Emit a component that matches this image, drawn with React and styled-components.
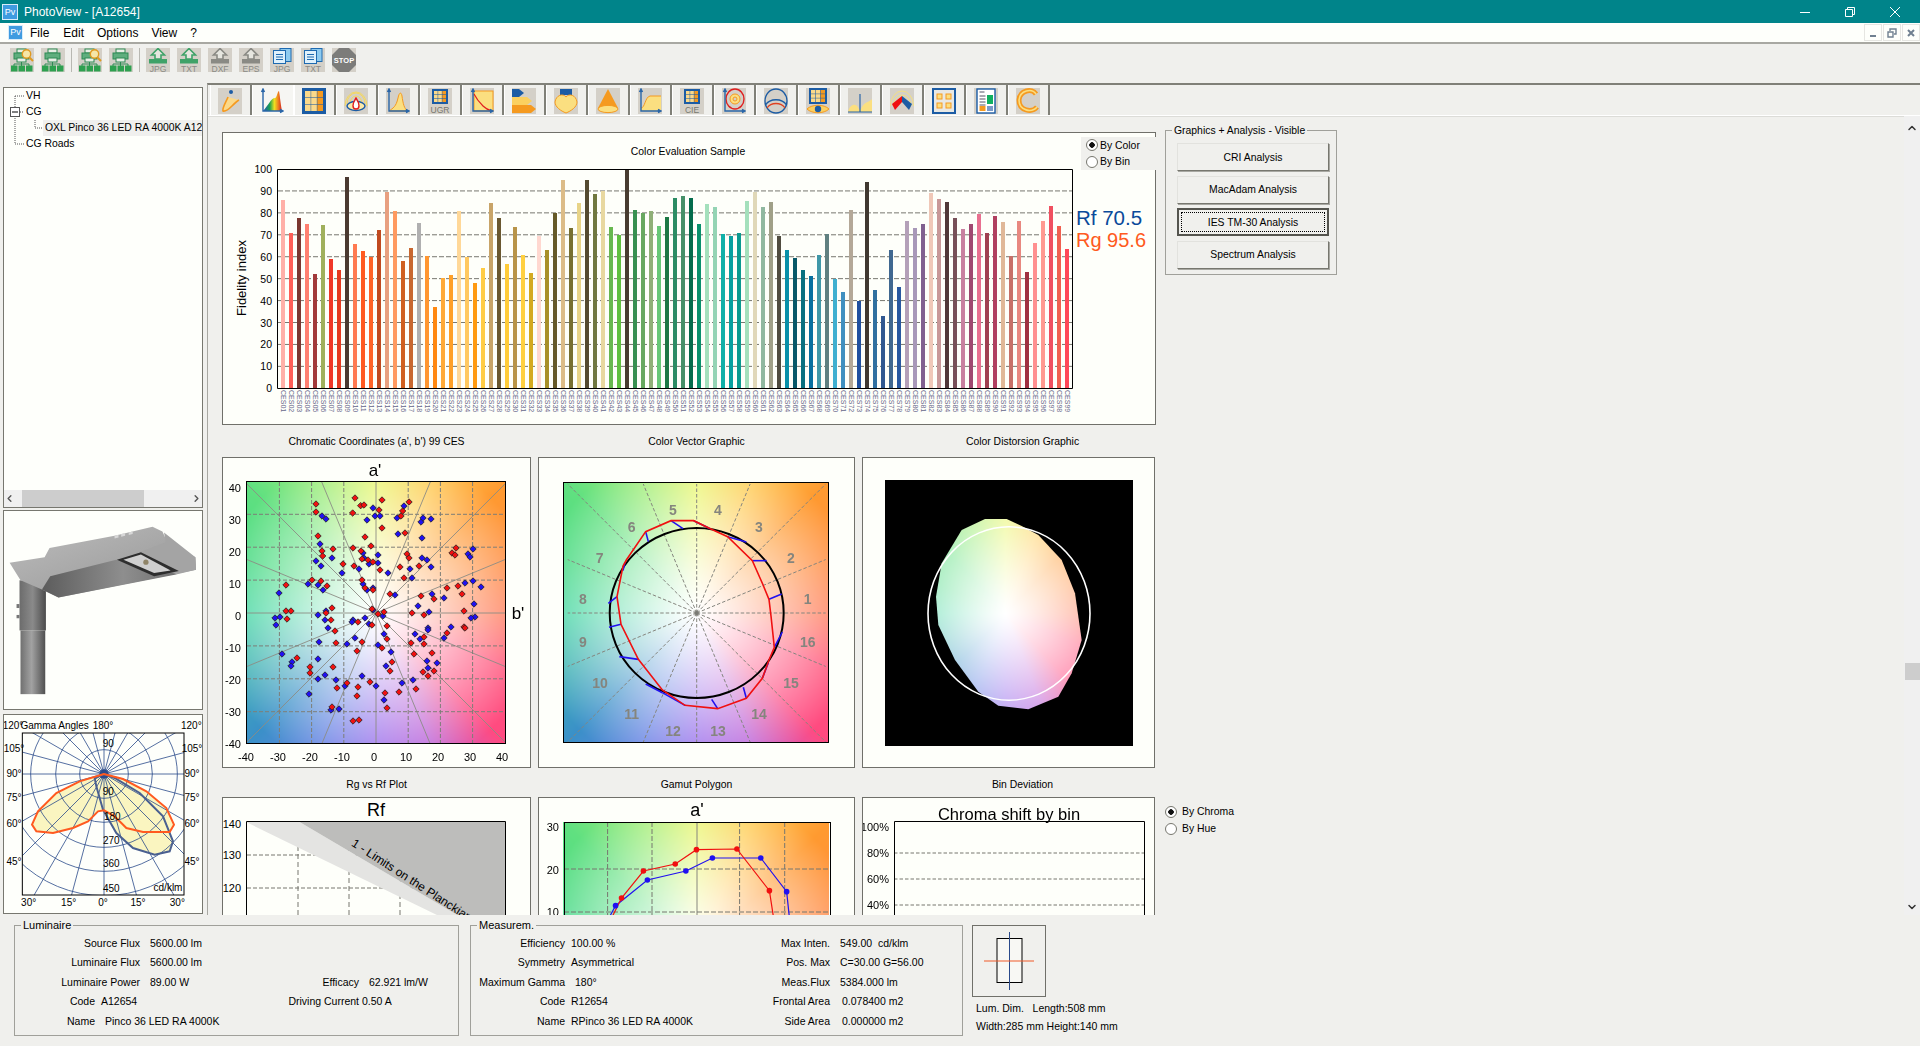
import React, { useEffect, useRef } from "react";
import styled, { createGlobalStyle } from "styled-components";
import { ChevronUp, ChevronDown, ChevronLeft, ChevronRight } from "lucide-react";

const GlobalStyle = createGlobalStyle`
  html, body { margin: 0; padding: 0; background: #f0f0ed; }
  body { font-family: "Liberation Sans", Arial, sans-serif; font-size: 11px; color: #000; }
  * { box-sizing: border-box; }
`;

const Window = styled.div`
  width: 1920px;
  height: 1046px;
  display: flex;
  flex-direction: column;
  overflow: hidden;
  background: #f0f0ed;
`;

const TitleBar = styled.div`
  height: 23px;
  background: #00848a;
  color: #fff;
  font-size: 12px;
  display: flex;
  align-items: center;
  padding-left: 2px;
  flex: none;
`;

const AppBadge = styled.span`
  width: ${(p) => p.$size}px;
  height: ${(p) => p.$size}px;
  background: #3f9be0;
  border: 1px solid #d8ecfa;
  color: #fff;
  font-size: 9px;
  line-height: ${(p) => p.$size - 2}px;
  text-align: center;
  flex: none;
`;

const TitleText = styled.span`
  margin-left: 6px;
  flex: 1;
`;

const WinControls = styled.div`
  display: flex;
  align-items: center;
  height: 100%;
  padding-right: 20px;
  gap: 35px;
`;

const MenuBar = styled.div`
  height: 21px;
  background: #fefffb;
  border-bottom: 2px solid #a8a8a2;
  display: flex;
  align-items: center;
  padding-left: 8px;
  font-size: 12px;
  flex: none;
`;

const MenuItem = styled.span`
  margin-left: ${(p) => p.$ml}px;
`;

const MdiButtons = styled.div`
  margin-left: auto;
  display: flex;
  gap: 1px;
`;

const MdiButton = styled.span`
  width: 18px;
  height: 17px;
  border: 1px solid #e6e6e2;
  display: flex;
  align-items: center;
  justify-content: center;
`;

const ToolBar = styled.div`
  height: 39px;
  display: flex;
  align-items: flex-start;
  padding: 4px 0 0 10px;
  gap: 7px;
  flex: none;
`;

const ToolSep = styled.span`
  width: 1px;
  height: 24px;
  background: #b8b8b2;
  margin: 0 -1px;
`;

const IconSvg = styled.svg`
  display: block;
  flex: none;
  background: ${(p) => p.$bg || "#d4d0c8"};
  font-family: "Liberation Sans", Arial, sans-serif;
`;

const Body = styled.div`
  height: 832px;
  display: flex;
  flex: none;
`;

const LeftColumn = styled.div`
  width: 207px;
  flex: none;
  padding: 4px 0 0 3px;
  display: flex;
  flex-direction: column;
  gap: 4px;
`;

const TreePanel = styled.div`
  width: 200px;
  height: 421px;
  border: 1px solid #77776f;
  background: #fefffb;
  display: flex;
  flex-direction: column;
  flex: none;
  margin-bottom: -2px;
`;

const TreeList = styled.div`
  flex: 1;
  position: relative;
  overflow: hidden;
`;

const TreeLines = styled.svg`
  position: absolute;
  left: 0;
  top: 0;
`;

const TreeRow = styled.div`
  height: 16px;
  line-height: 16px;
  font-size: 10.4px;
  white-space: nowrap;
  padding-left: ${(p) => (p.$child ? 39 : 22)}px;
`;

const TreeLabel = styled.span`
  padding: 0 ${(p) => (p.$sel ? 12 : 0)}px 0 ${(p) => (p.$sel ? 2 : 0)}px;
  display: inline-block;
  background: ${(p) => (p.$sel ? "#f0f0ee" : "transparent")};
`;

const HScroll = styled.div`
  height: 17px;
  background: #f0f0f0;
  display: flex;
  align-items: center;
  justify-content: space-between;
  flex: none;
`;

const HThumb = styled.span`
  width: 122px;
  height: 17px;
  background: #cdcdcd;
  margin-left: 7px;
  margin-right: auto;
`;

const ThumbPanel = styled.div`
  width: 200px;
  height: 200px;
  border: 1px solid #77776f;
  background: #fefffb;
  flex: none;
`;

const MainPane = styled.div`
  flex: 1;
  border-left: 1px solid #a8a8a2;
  border-top: 2px solid #808078;
  display: flex;
  flex-direction: column;
  min-width: 0;
`;

const TabStrip = styled.div`
  height: 31px;
  border-bottom: 1px solid #fff;
  box-shadow: 0 1px 0 #dcdcd8;
  display: flex;
  padding-left: 2px;
  flex: none;
`;

const Tab = styled.div`
  width: 42px;
  height: 30px;
  padding: 3px 0 0 7px;
  border-right: ${(p) => (p.$active ? "1px solid #fff" : "2px solid #808078")};
  border-left: 1px solid #fff;
  background: ${(p) => (p.$active ? "#f6f6f3" : "transparent")};
`;

const ScrollPane = styled.div`
  flex: 1;
  display: flex;
  min-height: 0;
  overflow: hidden;
`;

const Content = styled.div`
  flex: 1;
  padding: 16px 0 0 14px;
  overflow: hidden;
`;

const TopRow = styled.div`
  display: flex;
  align-items: flex-start;
  gap: 9px;
`;

const Panel = styled.div`
  position: relative;
  height: ${(p) => p.$h || 311}px;
  width: ${(p) => (p.$w ? `${p.$w}px` : "auto")};
  flex: none;
  background: #fefffa;
  border: 1px solid #70706a;
  padding: ${(p) => p.$pad ?? 0}px 0 0 ${(p) => p.$pad ?? 0}px;
`;

const FlowSvg = styled.svg`
  display: block;
  font-family: "Liberation Sans", Arial, sans-serif;
`;

const Overlay = styled.svg`
  position: absolute;
  left: 0;
  top: 0;
  width: 100%;
  height: 100%;
  font-family: "Liberation Sans", Arial, sans-serif;
`;

const ChartRadios = styled.div`
  position: absolute;
  left: 858px;
  top: 4px;
  width: 75px;
  height: 33px;
  background: #f0f0ed;
  display: flex;
  flex-direction: column;
`;

const RadioRow = styled.div`
  height: ${(p) => p.$h || 17}px;
  display: flex;
  align-items: center;
  gap: ${(p) => p.$gap || 5}px;
  padding-left: ${(p) => p.$pl || 0}px;
  font-size: 10.4px;
`;

const RadioDot = styled.span`
  width: 12px;
  height: 12px;
  border-radius: 50%;
  border: 1px solid #77776f;
  background: ${(p) =>
    p.$on ? "radial-gradient(circle, #111 0 2.5px, #fff 3px)" : "#fff"};
  flex: none;
`;

const GroupBox = styled.fieldset`
  margin: -7px 0 0 0;
  padding: 7px 0 0 11px;
  width: 172px;
  height: 150px;
  border: 1px solid #a0a09a;
  display: flex;
  flex-direction: column;
  gap: 4.5px;
`;

const GroupLegend = styled.legend`
  font-size: 10.4px;
  padding: 0 2px;
  margin-left: -5px;
`;

const AnalysisButton = styled.button`
  width: 152px;
  height: 28px;
  font: 10.4px "Liberation Sans", Arial, sans-serif;
  color: #000;
  background: #f0f0ed;
  border: ${(p) => (p.$focus ? "2px solid #55554f" : "1px solid")};
  border-color: ${(p) => (p.$focus ? "#55554f" : "#e2e2de #77776f #77776f #e2e2de")};
  box-shadow: ${(p) => (p.$focus ? "none" : "1px 1px 0 #a8a8a2")};
  outline: ${(p) => (p.$focus ? "1px dotted #000" : "none")};
  outline-offset: -5px;
  padding: 0;
`;

const PlotGrid = styled.div`
  display: grid;
  grid-template-columns: 309px 317px 293px 120px;
  column-gap: 7px;
`;

const CellTitle = styled.div`
  height: ${(p) => p.$h}px;
  padding: ${(p) => p.$top}px 0 0 ${(p) => p.$shift || 0}px;
  display: flex;
  align-items: center;
  justify-content: center;
  font-size: 10.4px;
`;

const SideRadios = styled.div`
  padding: 6px 0 0 3px;
`;

const BlackBox = styled.div`
  position: relative;
  width: 248px;
  height: 266px;
  background: #000;
`;

const Canvas = styled.canvas`
  display: block;
`;

const VScroll = styled.div`
  width: 16px;
  flex: none;
  background: #f0f0f0;
  display: flex;
  flex-direction: column;
  align-items: center;
  padding-top: 6px;
`;

const VThumb = styled.span`
  width: 15px;
  height: 17px;
  background: #cdcdcd;
  margin: 529px 0 221px;
  flex: none;
`;

const Footer = styled.div`
  height: 131px;
  display: flex;
  align-items: flex-start;
  padding: 4px 0 0 14px;
  flex: none;
`;

const Field = styled.fieldset`
  margin: 0 ${(p) => p.$mr}px 0 0;
  padding: 2px 0 0 0;
  width: ${(p) => p.$w}px;
  height: 117px;
  border: 1px solid #a0a09a;
  flex: none;
`;

const FieldLegend = styled.legend`
  font-size: 11px;
  padding: 0 2px;
  margin-left: 6px;
`;

const InfoRow = styled.div`
  height: 19.5px;
  display: flex;
  align-items: center;
  font-size: 10.5px;
  white-space: nowrap;
`;

const Lbl = styled.span`
  width: ${(p) => p.$w}px;
  text-align: right;
  flex: none;
`;

const Val = styled.span`
  width: ${(p) => (p.$w ? `${p.$w}px` : "auto")};
  margin-left: ${(p) => p.$ml}px;
  flex: none;
`;

const DimColumn = styled.div`
  display: flex;
  flex-direction: column;
  padding-top: 6px;
  font-size: 10.5px;
`;

const DimBox = styled.div`
  width: 74px;
  height: 72px;
  border: 1px solid #70706a;
  display: flex;
  align-items: center;
  justify-content: center;
`;

const DimText = styled.div`
  margin: ${(p) => p.$mt}px 0 0 4px;
  white-space: pre;
`;

// ---- data

const BARS = [
  [86, "#ffb0a8"], [71, "#ff5f57"], [77.5, "#7b3730"], [75, "#ff8070"], [52, "#a23a3a"], [74.5, "#a0b05c"],
  [59, "#f03828"], [54, "#e53a20"], [96.5, "#4a3a30"], [66, "#ff7a50"], [62.5, "#ff5a20"], [60, "#ff6428"],
  [72, "#c04a20"], [89.5, "#e8a080"], [81, "#ff9a60"], [58, "#d06020"], [64, "#c86830"], [75.5, "#b0b0b0"],
  [60.5, "#ff9630"], [37, "#ff8810"], [50.5, "#ffaa38"], [51.5, "#ffa028"], [81, "#ffd898"], [60, "#ffc860"],
  [48, "#ff9a10"], [55, "#ffcc44"], [84.5, "#c8a468"], [77.5, "#6a5830"], [56.5, "#ffcc38"], [73.5, "#b89448"],
  [61, "#ffd040"], [52.5, "#d4aa20"], [69.5, "#ffd8d0"], [63, "#a89028"], [80, "#665a28"], [95, "#dcbc88"],
  [73, "#787030"], [84.5, "#e8d488"], [95, "#544a30"], [88.5, "#707840"], [90, "#e8d8a0"], [73.5, "#68b850"],
  [70, "#60c040"], [100, "#483c30"], [81.5, "#389050"], [80, "#68a860"], [81, "#90b078"], [74, "#68c878"],
  [78, "#1c7844"], [87, "#2c8c64"], [87.5, "#469068"], [87, "#046c4c"], [75, "#08906c"], [84, "#a4e0bc"],
  [82.5, "#94d4b4"], [70.5, "#10b0a8"], [69.5, "#08a0a0"], [71, "#0a9a90"], [85.5, "#a4e0bc"], [89.5, "#e0d8b8"],
  [82.5, "#90b8a0"], [85, "#a0a088"], [69.5, "#504c40"], [63, "#0890a8"], [59.5, "#085868"], [54, "#087080"],
  [51, "#0870a0"], [61, "#4098a8"], [70.5, "#608080"], [50, "#40b0d0"], [44, "#4090c0"], [81.5, "#b4a898"],
  [40, "#2050a0"], [94, "#403830"], [45, "#3070a0"], [33, "#305890"], [63, "#406890"], [46, "#2858a0"],
  [76.4, "#b4a0b8"], [73, "#a898b8"], [75, "#806090"], [89, "#f0c8b8"], [86.4, "#c89898"], [85, "#503838"],
  [77.8, "#785058"], [72.8, "#c880a0"], [75, "#a04870"], [79.6, "#e87090"], [71, "#a04050"], [78.7, "#b04060"],
  [76, "#e0b898"], [60.5, "#c87068"], [76.4, "#e88880"], [53, "#a03040"], [66.4, "#ff9090"], [76.4, "#ff9a90"],
  [83, "#f05060"], [74, "#f06050"], [63.5, "#ff4858"],
];

const RED_DOTS = [
  [288,192],[288,216],[405,174],[422,197],[432,195],[486,180],[567,186],[477,210],[548,213],[543,228],[398,219],[486,264],
  [555,279],[435,291],[294,288],[453,318],[306,333],[308,348],[339,327],[399,324],[423,333],[426,357],[444,360],[459,366],
  [402,378],[369,372],[480,390],[540,381],[561,342],[567,354],[597,378],[552,414],[708,324],[696,339],[705,345],[276,420],
  [303,423],[321,438],[198,435],[426,420],[435,444],[459,450],[510,462],[603,468],[642,477],[681,444],[714,438],[726,462],
  [732,513],[198,513],[213,513],[201,537],[336,504],[318,519],[333,540],[456,507],[474,522],[492,516],[576,519],[612,525],
  [414,546],[456,555],[501,558],[345,573],[348,609],[426,606],[411,633],[501,597],[486,624],[573,609],[612,591],[612,612],
  [582,642],[636,639],[681,579],[732,561],[735,564],[231,654],[270,681],[270,699],[339,681],[516,666],[510,693],[609,696],
  [642,693],[624,708],[351,744],[381,729],[414,741],[411,768],[450,726],[495,759],[537,756],[588,747],[336,801],[501,804],
  [399,843],[417,840],
];

const BLUE_DOTS = [
  [306,228],[318,237],[441,240],[459,204],[465,228],[480,228],[552,198],[531,234],[603,246],[609,234],[633,237],[534,282],
  [606,294],[300,312],[288,363],[303,378],[336,354],[429,339],[432,354],[447,372],[474,345],[474,369],[417,387],[366,399],
  [504,399],[570,387],[606,354],[621,360],[633,381],[576,414],[744,342],[750,351],[759,327],[264,432],[294,435],[309,450],
  [429,432],[441,450],[459,444],[177,459],[525,465],[636,462],[672,474],[735,429],[759,423],[783,441],[594,498],[627,516],
  [762,492],[765,531],[753,534],[318,513],[294,525],[315,540],[165,534],[180,531],[168,555],[399,540],[396,546],[435,534],
  [447,552],[489,528],[459,510],[324,564],[492,582],[585,582],[600,597],[624,564],[624,570],[672,594],[693,561],[297,606],
  [381,612],[405,594],[474,615],[513,636],[186,642],[216,666],[213,678],[294,657],[498,678],[621,663],[651,669],[624,684],
  [315,705],[294,717],[348,720],[426,708],[375,738],[468,738],[546,729],[579,720],[267,762],[492,780],[357,807],[333,810],
];

const VECTOR_RED = [
  [408,242],[476,242],[526,266],[578,290],[652,362],[683,432],[702,478],[708,528],[718,622],[702,660],[682,715],[634,775],
  [548,806],[450,796],[382,750],[310,658],[258,553],[246,470],[264,378],[274,360],[332,275],
];

const VECTOR_BLUE = [
  [[476,242],[526,266]], [[578,290],[634,306]], [[652,362],[695,362]], [[702,478],[740,462]], [[718,622],[742,576]],
  [[682,715],[700,668]], [[634,775],[625,742]], [[548,806],[530,778]], [[450,796],[382,758]], [[382,758],[332,732]],
  [[310,658],[253,650]], [[258,553],[222,562]], [[246,470],[220,490]], [[264,392],[270,368]], [[332,275],[340,305]],
  [[408,242],[444,266]],
];

const BIN_NUMBERS = [
  ["1",818,478],["2",768,354],["3",672,262],["4",549,210],["5",414,210],["6",290,262],["7",194,354],["8",144,478],
  ["9",144,606],["10",195,730],["11",290,822],["12",414,874],["13",549,874],["14",672,822],["15",768,730],["16",818,606],
];

const DISTORT_SHAPE = [
  [390,237],[455,237],[500,258],[550,285],[620,360],[660,460],[680,600],[650,700],[610,770],[520,808],[430,797],[370,755],
  [300,660],[250,555],[243,470],[260,370],[320,270],
];

const GAMUT_RED = [[590,440],[604,384],[637,303],[685,282],[717,239],[778,237],[827,362],[833,440]];
const GAMUT_BLUE = [[586,440],[595,407],[643,330],[701,303],[741,264],[814,264],[853,365],[857,440]];

const POLAR_ORANGE = "M313 823 L240 845 L170 880 L115 935 L97 975 L110 995 L160 1000 L220 985 L265 965 L295 935 L313 932 L345 950 L380 985 L430 997 L510 997 L523 975 L500 925 L440 875 L370 838 Z";
const POLAR_BLUE = "M313 823 L285 835 L290 860 L310 930 L350 1000 L400 1045 L465 1065 L510 1055 L520 1025 L490 950 L420 880 L345 835 Z";

const POLAR_TEXT = [
  ["120°",40,677],["Gamma Angles",165,677],["180°",310,677],["120°",575,677],["105°",43,748],["105°",577,748],
  ["90°",43,822],["90°",577,822],["75°",43,893],["75°",577,893],["60°",43,973],["60°",577,973],["45°",43,1085],["45°",577,1085],
  ["30°",87,1208],["15°",207,1208],["0°",310,1208],["15°",415,1208],["30°",533,1208],
  ["90",326,731],["90",326,875],["180",338,950],["270",335,1022],["360",335,1093],["450",335,1168],["cd/klm",505,1163],
];

// colour wheel going counter clockwise from +x, 16 steps
const WHEEL = [
  "#ff7b59","#ff8e42","#ff9a30","#ffcc55","#e9f66e","#a1ed7b","#60e080","#4bda84",
  "#44d6a2","#42b4b4","#3a90c8","#6884e4","#986eeb","#be68da","#ff4a80","#ff557b",
].map((h) => [1, 3, 5].map((i) => parseInt(h.slice(i, i + 2), 16)));

const wheelPixel = (nx, ny) => {
  const a = (Math.atan2(ny, nx) + Math.PI * 2) % (Math.PI * 2);
  const f = a / (Math.PI / 8);
  const i = Math.floor(f) % 16;
  const j = (i + 1) % 16;
  const k = f - Math.floor(f);
  const t = Math.pow(Math.min(1, Math.hypot(nx, ny) / 1.25), 1.2);
  return WHEEL[i].map((c, n) => 255 + (c + (WHEEL[j][n] - c) * k - 255) * t);
};

const ColorWheel = ({ width, height, cx, cy, rx, ry, style }) => {
  const ref = useRef(null);
  useEffect(() => {
    const ctx = ref.current.getContext("2d");
    const img = ctx.createImageData(width, height);
    for (let y = 0; y < height; y++) {
      for (let x = 0; x < width; x++) {
        const c = wheelPixel((x - cx) / rx, (cy - y) / ry);
        const o = (y * width + x) * 4;
        img.data[o] = c[0];
        img.data[o + 1] = c[1];
        img.data[o + 2] = c[2];
        img.data[o + 3] = 255;
      }
    }
    ctx.putImageData(img, 0, 0);
  }, [width, height, cx, cy, rx, ry]);
  return <Canvas ref={ref} width={width} height={height} style={style} />;
};

// ---- little helpers

const pts = (list, ox, oy, sx = 3, sy = 3) =>
  list.map(([x, y]) => `${ox + x / sx},${oy + y / sy}`).join(" ");

const Txt = ({ x, y, size = 11, anchor = "middle", fill = "#000", children, ...rest }) => (
  <text x={x} y={y} fontSize={size} textAnchor={anchor} dominantBaseline="central" fill={fill} {...rest}>
    {children}
  </text>
);

const Diamond = ({ x, y, fill }) => (
  <path d={`M${x} ${y - 3.2}L${x + 3.2} ${y}L${x} ${y + 3.2}L${x - 3.2} ${y}Z`} fill={fill} stroke="#222" strokeWidth="0.8" />
);

const range = (n) => Array.from({ length: n }, (_, i) => i);

// ---- small icons

const Ico = ({ h = 26, children, bg }) => (
  <IconSvg width="24" height={h} viewBox={`0 0 24 ${h}`} $bg={bg}>
    {children}
  </IconSvg>
);

const NetIcon = ({ lens }) => (
  <Ico h={24}>
    <rect x="7" y="1" width="9" height="4" fill="#e8efe6" stroke="#2e8a55" />
    <rect x="4" y="5" width="15" height="6" fill="#5fae7e" stroke="#2e8a55" />
    <rect x="7" y="10" width="9" height="4" fill="#e8efe6" stroke="#2e8a55" />
    <path d="M11.5 14v2M4 18v-2h15v2M11.5 16v2" fill="none" stroke="#2e8a55" />
    <rect x="1" y="17.5" width="6.5" height="6" fill="#2ea050" />
    <rect x="8.5" y="17.5" width="6.5" height="6" fill="#2ea050" />
    <rect x="16" y="17.5" width="6.5" height="6" fill="#2ea050" />
    {lens && (
      <g>
        <circle cx="16.5" cy="6" r="4.2" fill="#f5e6a8" stroke="#e09a20" strokeWidth="1.4" />
        <path d="M19.5 9.5l3.5 3.5" stroke="#e09a20" strokeWidth="2" />
      </g>
    )}
  </Ico>
);

const UploadIcon = ({ color, label }) => (
  <Ico h={24}>
    <path d="M12 0.5l6.5 6.5H15v4H9V7H5.5z" fill="#e6e6df" stroke={color} strokeWidth="1.6" />
    <rect x="3" y="11" width="18" height="4.5" fill={color} />
    <Txt x="12" y="20.5" size="8.5" fill="#8a8a84">{label}</Txt>
  </Ico>
);

const DocIcon = ({ label }) => (
  <Ico h={24}>
    <rect x="10" y="0.5" width="11" height="13" fill="#8ecbf0" stroke="#1e6ab0" />
    <rect x="3.5" y="2.5" width="12" height="13" fill="#dff1fc" stroke="#1e6ab0" />
    <path d="M6 6.5h7M6 9h7M6 11.5h7" stroke="#1e6ab0" />
    <Txt x="12" y="20.5" size="8.5" fill="#8a8a84">{label}</Txt>
  </Ico>
);

const StopIcon = () => (
  <Ico h={24}>
    <path d="M7 0h10l7 7v10l-7 7H7l-7-7V7z" fill="#7c7c7a" />
    <Txt x="12" y="12.5" size="7.5" fill="#fff" fontWeight="bold">STOP</Txt>
  </Ico>
);

const Axes = () => (
  <path d="M3 1v22h20M1.5 4L3 1l1.5 3M20 21.5l3 1.5-3 1.5" fill="none" stroke="#2a66a8" strokeWidth="1.4" />
);

const TableGlyph = ({ x = 4, y = 1, w = 16, h = 15 }) => {
  const cw = (w - 5) / 3;
  const ch = (h - 5) / 3;
  return (
    <g>
      <rect x={x} y={y} width={w} height={h} fill="#1c5ca4" />
      {range(9).map((i) => (
        <rect
          key={i}
          x={x + 2 + (i % 3) * (cw + 0.5)}
          y={y + 2 + Math.floor(i / 3) * (ch + 0.5)}
          width={cw}
          height={ch}
          fill={i % 3 === 2 ? "#f59a20" : "#fbd98a"}
        />
      ))}
    </g>
  );
};

const TAB_ICONS = [
  <Ico key="0">
    <circle cx="13" cy="4" r="2" fill="#1c5ca4" />
    <path d="M10 9C8 14 4 20 5 23c3 1 6-2 9-5 3-3 5-5 7-6" fill="#fbd98a" stroke="#f59a20" strokeWidth="1.6" />
  </Ico>,
  <Ico key="1" bg="#f6f6f3">
    <defs>
      <linearGradient id="spec" x1="0" x2="1" y1="0" y2="0">
        <stop offset="0" stopColor="#2050c0" />
        <stop offset="0.35" stopColor="#18a050" />
        <stop offset="0.6" stopColor="#f0e020" />
        <stop offset="0.8" stopColor="#f08020" />
        <stop offset="1" stopColor="#d02020" />
      </linearGradient>
    </defs>
    <path d="M3 23C8 18 11 10 15 10c2 0 2-6 4-7 1 6 2 16 3 20z" fill="url(#spec)" />
    <Axes />
  </Ico>,
  <Ico key="2" bg="#1c5ca4"><TableGlyph x={1} y={1} w={22} h={24} /></Ico>,
  <Ico key="3">
    <path d="M3 16a9 11 0 0 1 18 0M6 16a6 8 0 0 1 12 0" fill="none" stroke="#f5d860" strokeWidth="1" />
    <path d="M1 18a11 14 0 0 1 22 0" fill="none" stroke="#f5d860" strokeWidth="1" />
    <ellipse cx="12" cy="18" rx="9" ry="4.5" fill="#fbe9a8" stroke="#1c5ca4" strokeWidth="1.4" />
    <path d="M12 10c-4 6-4 11 0 11s4-5 0-11z" fill="#fff" stroke="#e02020" strokeWidth="1.4" />
  </Ico>,
  <Ico key="4">
    <path d="M3 23C7 20 10 19 12 10c1-5 3-7 4-2 1 7 2 13 6 15z" fill="#fbdf80" stroke="#f59a20" />
    <Axes />
  </Ico>,
  <Ico key="5">
    <TableGlyph x={4} y={1} w={16} h={15} />
    <Txt x="12" y="21.5" size="8.5" fill="#77776f">UGR</Txt>
  </Ico>,
  <Ico key="6">
    <rect x="4" y="3" width="19" height="20" fill="#fbdf80" stroke="#f59a20" />
    <path d="M4 6c3 6 6 9 9 12 3 3 5 4 9 5" fill="none" stroke="#e02020" strokeWidth="1.2" />
    <Axes />
  </Ico>,
  <Ico key="7">
    <path d="M0 1h7l5 4-5 4H0z" fill="#1c5ca4" />
    <path d="M0 9h15l5 4-5 4H0z" fill="#fbd060" />
    <path d="M0 17h19l5 4-5 4H0z" fill="#f59a20" />
  </Ico>,
  <Ico key="8">
    <rect x="6" y="1" width="12" height="6" fill="#1c5ca4" />
    <path d="M12 9c3-4 10-2 11 5 0 5-6 9-11 11C7 23 1 19 1 14 2 7 9 5 12 9z" fill="#fbdf80" stroke="#f59a20" />
  </Ico>,
  <Ico key="9">
    <path d="M12 1L2 20h20z" fill="#f59a20" />
    <ellipse cx="12" cy="21" rx="10" ry="3.6" fill="#fbdf80" stroke="#f59a20" />
  </Ico>,
  <Ico key="10">
    <path d="M3 23V20C7 20 7 9 12 8h11v15z" fill="#fbdf80" />
    <path d="M3 20C7 20 7 9 12 8h11" fill="none" stroke="#f59a20" />
    <Axes />
  </Ico>,
  <Ico key="11">
    <TableGlyph x={4} y={1} w={16} h={15} />
    <Txt x="12" y="21.5" size="8.5" fill="#77776f">CIE</Txt>
  </Ico>,
  <Ico key="12">
    <ellipse cx="13" cy="11" rx="9" ry="10" fill="none" stroke="#e02020" strokeWidth="1.4" />
    <ellipse cx="13" cy="11" rx="5" ry="5" fill="#fbdf80" stroke="#f59a20" />
    <circle cx="13" cy="11" r="2" fill="#d4d0c8" stroke="#f59a20" />
    <Axes />
  </Ico>,
  <Ico key="13">
    <ellipse cx="12" cy="13" rx="11" ry="12" fill="none" stroke="#1c5ca4" strokeWidth="1.3" />
    <path d="M1.5 17C6 10 18 10 22.5 17" fill="none" stroke="#1c5ca4" strokeWidth="1.3" />
    <path d="M3 20C7 14 17 14 21 20" fill="none" stroke="#e04020" strokeWidth="1.3" />
  </Ico>,
  <Ico key="14">
    <TableGlyph x={3} y={0} w={18} h={16} />
    <path d="M1 21c5-5 17-5 22 0-5 5-17 5-22 0z" fill="#fbd060" stroke="#f59a20" />
    <circle cx="12" cy="21" r="3.2" fill="#1c5ca4" />
  </Ico>,
  <Ico key="15">
    <path d="M0 24c2-9 9-9 11-3h2c2-7 9-7 11-10v13z" fill="#fbdf80" />
    <path d="M12 6v18M0 24h24" stroke="#2a66a8" strokeWidth="1.2" />
  </Ico>,
  <Ico key="16">
    <path d="M3 18a9 11 0 0 1 18 0M6 18a6 8 0 0 1 12 0M0.5 18a11.5 15 0 0 1 23 0" fill="none" stroke="#f5e080" />
    <path d="M12 8l-10 8 3 6 7-8z" fill="#f01010" />
    <path d="M12 8l10 8-3 6-7-8z" fill="#1c5ca4" />
  </Ico>,
  <Ico key="17" bg="#e8e8e4">
    <rect x="1" y="1" width="22" height="24" fill="#e8e8e4" stroke="#1c5ca4" strokeWidth="2" />
    <rect x="5" y="6" width="5" height="5" fill="#fbdf80" stroke="#f59a20" />
    <rect x="14" y="6" width="5" height="5" fill="#fbdf80" stroke="#f59a20" />
    <rect x="5" y="15" width="5" height="5" fill="#fbdf80" stroke="#f59a20" />
    <rect x="14" y="15" width="5" height="5" fill="#fbdf80" stroke="#f59a20" />
  </Ico>,
  <Ico key="18">
    <rect x="3" y="1" width="18" height="24" fill="#fff" stroke="#1c5ca4" strokeWidth="1.4" />
    <path d="M5.5 4h5M5.5 8h6M5.5 11h6M5.5 14h6M5.5 17h6" stroke="#556" />
    <rect x="13" y="7" width="6" height="9" fill="#10b060" />
    <rect x="5.5" y="18" width="6" height="5" fill="#f59a20" />
    <rect x="13" y="18" width="6" height="5" fill="#7a9ac8" />
  </Ico>,
  <Ico key="19">
    <path d="M20 6C16 0 4 2 3 12c0 11 13 13 18 7" fill="none" stroke="#f59a20" strokeWidth="5" />
    <path d="M20 6C16 0 4 2 3 12c0 11 13 13 18 7" fill="none" stroke="#fbdf80" strokeWidth="1.6" />
  </Ico>,
];

// ---- charts

const BarChart = () => {
  const base = 388.3;
  const unit = 2.193;
  return (
    <FlowSvg width="932" height="291" viewBox="223 133 932 291">
      <Txt x="688" y="151" size="10.4">Color Evaluation Sample</Txt>
      {range(9).map((i) => (
        <line key={i} x1="278" x2="1072" y1={base - (i + 1) * 10 * unit} y2={base - (i + 1) * 10 * unit} stroke="#77776f" strokeDasharray="5 2" />
      ))}
      {range(11).map((i) => (
        <Txt key={i} x="272" y={base - i * 10 * unit} anchor="end" size="10.5">{i * 10}</Txt>
      ))}
      <Txt x="241" y="278" size="13" transform="rotate(-90 241 278)">Fidelity index</Txt>
      {BARS.map(([v, c], i) => (
        <rect key={i} x={281 + 8 * i} y={base - v * unit} width="4" height={v * unit} fill={c} shapeRendering="crispEdges" />
      ))}
      <path d="M277.5 388.5V169.5H1072.5V388.5H277.5" fill="none" stroke="#000" strokeWidth="1" />
      {BARS.map((_, i) => {
        const x = 283 + 8 * i;
        return (
          <text key={i} x={x} y="390" fontSize="7" fill="#66668a" dominantBaseline="central" transform={`rotate(90 ${x} 390)`}>
            {`CES${String(i + 1).padStart(2, "0")}`}
          </text>
        );
      })}
      <Txt x="1076" y="217" size="20.5" anchor="start" fill="#0a4a9a">Rf 70.5</Txt>
      <Txt x="1076" y="240" size="20" anchor="start" fill="#ff5a20">Rg 95.6</Txt>
    </FlowSvg>
  );
};

const ScatterPlot = () => {
  const cx = 376;
  const cy = 613;
  const spokes = [0, 22.5, 45, 67.5, 90, 112.5, 135, 157.5];
  return (
    <Panel $pad={24}>
      <ColorWheel width={259} height={262} cx={129} cy={131} rx={130} ry={131} />
      <Overlay viewBox="223 458 307 309">
        <clipPath id="scatterClip"><rect x="247" y="482" width="259" height="262" /></clipPath>
        <g clipPath="url(#scatterClip)">
          {spokes.map((a) => {
            const dx = Math.cos((a * Math.PI) / 180) * 200;
            const dy = Math.sin((a * Math.PI) / 180) * 200;
            return <line key={a} x1={cx - dx} x2={cx + dx} y1={cy + dy} y2={cy - dy} stroke="#8c8c85" strokeWidth="0.9" />;
          })}
          {[-30, -20, -10, 10, 20, 30].map((v) => (
            <g key={v}>
              <line x1={cx + v * 3.22} x2={cx + v * 3.22} y1="482" y2="744" stroke="#7e7e77" strokeDasharray="4 2" />
              <line x1="247" x2="506" y1={cy - v * 3.29} y2={cy - v * 3.29} stroke="#7e7e77" strokeDasharray="4 2" />
            </g>
          ))}
        </g>
        <rect x="246.5" y="481.5" width="259" height="262" fill="none" stroke="#000" />
        {BLUE_DOTS.map(([x, y], i) => <Diamond key={i} x={220 + x / 3} y={440 + y / 3} fill="#2010f0" />)}
        {RED_DOTS.map(([x, y], i) => <Diamond key={i} x={220 + x / 3} y={440 + y / 3} fill="#f01010" />)}
        {[40, 30, 20, 10, 0, -10, -20, -30, -40].map((v, i) => (
          <Txt key={v} x="241" y={488 + i * 32} anchor="end" size="11">{v}</Txt>
        ))}
        {[-40, -30, -20, -10, 0, 10, 20, 30, 40].map((v, i) => (
          <Txt key={v} x={246 + i * 32} y="757" size="11">{v}</Txt>
        ))}
        <Txt x="375" y="470" size="17">a'</Txt>
        <Txt x="518" y="613" size="17">b'</Txt>
      </Overlay>
    </Panel>
  );
};

const VectorPlot = () => {
  const cx = 696.7;
  const cy = 613;
  return (
    <Panel $pad={24}>
      <ColorWheel width={265} height={261} cx={133} cy={131} rx={133} ry={131} />
      <Overlay viewBox="539 458 315 309">
        <clipPath id="vecClip"><rect x="563" y="482" width="265" height="261" /></clipPath>
        <g clipPath="url(#vecClip)">
          {range(16).map((i) => {
            const a = (i * Math.PI) / 8;
            const c = Math.cos(a);
            const s = Math.sin(a);
            const k = 129 / Math.max(Math.abs(c), Math.abs(s));
            return <line key={i} x1={cx} y1={cy} x2={cx + c * k} y2={cy - s * k} stroke="#85857e" strokeDasharray="3.5 2" />;
          })}
        </g>
        <circle cx={cx} cy={cy} r="2" fill="#7a7a74" />
        {BIN_NUMBERS.map(([t, x, y]) => (
          <Txt key={t} x={535 + x / 3} y={440 + y / 3} size="14" fontWeight="bold" fill="#85857e">{t}</Txt>
        ))}
        <ellipse cx={cx} cy={cy} rx="87" ry="85" fill="none" stroke="#000" strokeWidth="2" />
        {VECTOR_BLUE.map(([a, b], i) => (
          <line key={i} x1={535 + a[0] / 3} y1={440 + a[1] / 3} x2={535 + b[0] / 3} y2={440 + b[1] / 3} stroke="#2010f0" strokeWidth="1.6" />
        ))}
        <polygon points={pts(VECTOR_RED, 535, 440)} fill="none" stroke="#f01010" strokeWidth="1.6" />
        <rect x="563.5" y="482.5" width="265" height="260" fill="none" stroke="#000" />
      </Overlay>
    </Panel>
  );
};

const DistortionPlot = () => {
  const outline = DISTORT_SHAPE.map(([x, y]) => `${(x - 90) / 3}px ${(y - 120) / 3}px`).join(",");
  return (
    <Panel $pad={22}>
      <BlackBox>
        <ColorWheel
          width={248}
          height={266}
          cx={120}
          cy={133}
          rx={118}
          ry={124}
          style={{ clipPath: `polygon(${outline})` }}
        />
        <Overlay viewBox="0 0 248 266">
          <ellipse cx="124" cy="133.5" rx="81" ry="86.7" fill="none" stroke="#fff" strokeWidth="1.6" />
        </Overlay>
      </BlackBox>
    </Panel>
  );
};

const RgRfPlot = () => (
  <Panel>
    <FlowSvg width="307" height="309" viewBox="223 798 307 309">
      <Txt x="376" y="810" size="18">Rf</Txt>
      {[855, 888].map((y) => (
        <line key={y} x1="247" x2="505" y1={y} y2={y} stroke="#77776f" strokeDasharray="4 2" />
      ))}
      {[298, 349, 400].map((x) => (
        <line key={x} x1={x} x2={x} y1="822" y2="960" stroke="#77776f" strokeDasharray="5 3" />
      ))}
      <polygon points="246,822 299.6,822 459,916 439,916" fill="#e4e4e2" />
      <polygon points="299.6,822 505,822 505,916 459,916" fill="#bdbdbb" />
      <path d="M246.5 1100V821.5H505.5V1100" fill="none" stroke="#000" />
      <Txt x="353" y="842" size="12" anchor="start" transform="rotate(33 353 842)">1 - Limits on the Planckian locus</Txt>
      {[[140, 824], [130, 855], [120, 888]].map(([v, y]) => (
        <Txt key={v} x="241" y={y} anchor="end" size="11">{v}</Txt>
      ))}
    </FlowSvg>
  </Panel>
);

const GamutPlot = () => {
  const xy = (list) => list.map(([x, y]) => [220 + x / 1.508, 770 + y / 3]);
  return (
    <Panel $pad={24}>
      <ColorWheel width={266} height={266} cx={133} cy={133} rx={133} ry={133} />
      <Overlay viewBox="538 798 315 309">
        {[606.6, 651, 738.6, 783.7].map((x) => (
          <line key={x} x1={x} x2={x} y1="822" y2="1088" stroke="#77776f" strokeDasharray="5 2" />
        ))}
        <line x1="696" x2="696" y1="822" y2="1088" stroke="#86867f" />
        {[869, 912].map((y) => (
          <line key={y} x1="563" x2="829" y1={y} y2={y} stroke="#77776f" strokeDasharray="5 2" />
        ))}
        <polyline points={xy(GAMUT_BLUE).join(" ")} fill="none" stroke="#2010f0" strokeWidth="1.2" />
        <polyline points={xy(GAMUT_RED).join(" ")} fill="none" stroke="#f01010" strokeWidth="1.2" />
        {xy(GAMUT_BLUE).slice(1, 7).map(([x, y], i) => <circle key={i} cx={x} cy={y} r="2.8" fill="#2010f0" />)}
        {xy(GAMUT_RED).slice(1, 7).map(([x, y], i) => <circle key={i} cx={x} cy={y} r="2.8" fill="#f01010" />)}
        <rect x="563.5" y="822.5" width="266" height="266" fill="none" stroke="#000" />
        <Txt x="696" y="810" size="18">a'</Txt>
        {[[30, 827], [20, 870], [10, 912]].map(([v, y]) => (
          <Txt key={v} x="558" y={y} anchor="end" size="11">{v}</Txt>
        ))}
      </Overlay>
    </Panel>
  );
};

const BinPlot = () => (
  <Panel>
    <FlowSvg width="291" height="309" viewBox="863 798 291 309">
      <Txt x="1009" y="814" size="16.5">Chroma shift by bin</Txt>
      {[853, 879, 905].map((y) => (
        <line key={y} x1="894" x2="1144" y1={y} y2={y} stroke="#77776f" strokeDasharray="3.5 2" />
      ))}
      <path d="M894.5 1100V821.5H1144.5V1100" fill="none" stroke="#000" />
      {[["100%", 827], ["80%", 853], ["60%", 879], ["40%", 905]].map(([t, y]) => (
        <Txt key={t} x="889" y={y} anchor="end" size="11">{t}</Txt>
      ))}
    </FlowSvg>
  </Panel>
);

const LampPicture = () => (
  <FlowSvg width="198" height="198" viewBox="10 30 600 600">
    <defs>
      <linearGradient id="poleTop" x1="0" x2="1" y1="0" y2="0">
        <stop offset="0" stopColor="#6c6c6c" />
        <stop offset="0.5" stopColor="#8a8a8a" />
        <stop offset="1" stopColor="#4c4c4c" />
      </linearGradient>
      <linearGradient id="poleLow" x1="0" x2="1" y1="0" y2="0">
        <stop offset="0" stopColor="#707070" />
        <stop offset="0.45" stopColor="#a2a2a2" />
        <stop offset="1" stopColor="#505050" />
      </linearGradient>
      <linearGradient id="hood" x1="0" x2="1" y1="0" y2="1">
        <stop offset="0" stopColor="#bcbcbc" />
        <stop offset="0.55" stopColor="#a6a6a6" />
        <stop offset="1" stopColor="#8a8a8a" />
      </linearGradient>
      <linearGradient id="under" x1="0" x2="1" y1="0" y2="0">
        <stop offset="0" stopColor="#5c5c5c" />
        <stop offset="0.6" stopColor="#8e8e8e" />
        <stop offset="1" stopColor="#707070" />
      </linearGradient>
    </defs>
    <rect x="60" y="392" width="75" height="193" fill="url(#poleLow)" />
    <rect x="57" y="240" width="80" height="152" fill="url(#poleTop)" />
    <rect x="48" y="312" width="9" height="12" fill="#777" />
    <rect x="48" y="345" width="9" height="10" fill="#777" />
    <path d="M27 187L133 170 148 142 345 105 460 78 490 92 505 125 590 170 592 208 175 292 125 268 60 240z" fill="url(#hood)" />
    <path d="M150 228L350 178 535 222 175 292 125 268z" fill="url(#under)" />
    <path d="M495 95L590 170 592 208 535 222 420 155 500 125z" fill="#a4a4a4" />
    <path d="M352 178L425 155 540 212 465 228z" fill="#2e2e2e" />
    <path d="M372 178L425 162 515 210 465 218z" fill="#cfcfcf" />
    <circle cx="440" cy="185" r="8" fill="#8f8468" />
    <path d="M345 105l12-3v8l-12 3zM365 100l12-3v8l-12 3zM388 95l12-3v8l-12 3z" fill="#d8d8d8" />
  </FlowSvg>
);

const PolarPlot = () => (
  <FlowSvg width="198" height="198" viewBox="13 646 594 594">
    <clipPath id="polarClip"><rect x="68" y="700" width="485" height="486" /></clipPath>
    <g clipPath="url(#polarClip)">
      <path d={POLAR_ORANGE} fill="#faf5c0" />
      <path d={POLAR_BLUE} fill="#faf5c0" />
      {range(24).map((i) => {
        const a = (i * Math.PI) / 12;
        return (
          <line key={i} x1="313" y1="823" x2={313 + Math.cos(a) * 640} y2={823 + Math.sin(a) * 640} stroke="#2a4a8a" strokeWidth="2.4" />
        );
      })}
      {[73, 145, 220, 292, 365].map((r) => (
        <circle key={r} cx="313" cy="823" r={r} fill="none" stroke="#2a4a8a" strokeWidth="2.4" />
      ))}
      <circle cx="313" cy="823" r="14" fill="#2a4a8a" />
      <path d={POLAR_BLUE} fill="none" stroke="#4a6090" strokeWidth="6" />
      <path d={POLAR_ORANGE} fill="none" stroke="#ff5a20" strokeWidth="6" />
    </g>
    <rect x="68" y="700" width="485" height="486" fill="none" stroke="#000" strokeWidth="3" />
    {POLAR_TEXT.map(([t, x, y], i) => (
      <Txt key={i} x={x} y={y} size="30">{t}</Txt>
    ))}
  </FlowSvg>
);

// ---- page

const TOOL_GROUPS = [
  [<NetIcon key="a" lens />, <NetIcon key="b" />],
  [<NetIcon key="c" lens />, <NetIcon key="d" />],
  [
    <UploadIcon key="e" color="#3fa268" label="JPG" />,
    <UploadIcon key="f" color="#3fa268" label="TXT" />,
    <UploadIcon key="g" color="#8a8a84" label="DXF" />,
    <UploadIcon key="h" color="#8a8a84" label="EPS" />,
    <DocIcon key="i" label="JPG" />,
    <DocIcon key="j" label="TXT" />,
    <StopIcon key="k" />,
  ],
];

export default function App() {
  return (
    <Window>
      <GlobalStyle />
      <TitleBar>
        <AppBadge $size={16}>Pv</AppBadge>
        <TitleText>PhotoView - [A12654]</TitleText>
        <WinControls>
          <svg width="10" height="10" viewBox="0 0 10 10"><path d="M0 5.5h10" stroke="#fff" /></svg>
          <svg width="10" height="10" viewBox="0 0 10 10"><path d="M.5 2.5h7v7h-7zM2.5 2.5v-2h7v7h-2" fill="none" stroke="#fff" /></svg>
          <svg width="10" height="10" viewBox="0 0 10 10"><path d="M0 0l10 10M10 0L0 10" stroke="#fff" /></svg>
        </WinControls>
      </TitleBar>
      <MenuBar>
        <AppBadge $size={15}>Pv</AppBadge>
        <MenuItem $ml={7}>File</MenuItem>
        <MenuItem $ml={14}>Edit</MenuItem>
        <MenuItem $ml={13}>Options</MenuItem>
        <MenuItem $ml={13}>View</MenuItem>
        <MenuItem $ml={13}>?</MenuItem>
        <MdiButtons>
          <MdiButton><svg width="10" height="10" viewBox="0 0 10 10"><path d="M2 8h6" stroke="#708090" strokeWidth="2" /></svg></MdiButton>
          <MdiButton><svg width="10" height="10" viewBox="0 0 10 10"><path d="M1 4h5v5H1zM3 3V1h6v5H7" fill="none" stroke="#708090" strokeWidth="1.4" /></svg></MdiButton>
          <MdiButton><svg width="10" height="10" viewBox="0 0 10 10"><path d="M2 2l6 6M8 2L2 8" stroke="#708090" strokeWidth="2" /></svg></MdiButton>
        </MdiButtons>
      </MenuBar>
      <ToolBar>
        {TOOL_GROUPS.map((g, i) => (
          <React.Fragment key={i}>
            {i > 0 && <ToolSep />}
            {g}
          </React.Fragment>
        ))}
      </ToolBar>
      <Body>
        <LeftColumn>
          <TreePanel>
            <TreeList>
              <TreeLines width="60" height="70">
                <path d="M11 8v48M11 8H20M11 56H20M31 32v8M31 40h7M16 24h4" fill="none" stroke="#555" strokeDasharray="1 1" />
                <rect x="6.5" y="19.5" width="9" height="9" fill="#fff" stroke="#555" />
                <path d="M8 24h6" stroke="#000" />
              </TreeLines>
              <TreeRow>VH</TreeRow>
              <TreeRow>CG</TreeRow>
              <TreeRow $child><TreeLabel $sel>OXL Pinco 36 LED RA 4000K A12654</TreeLabel></TreeRow>
              <TreeRow>CG Roads</TreeRow>
            </TreeList>
            <HScroll>
              <ChevronLeft size={11} strokeWidth={3} color="#555" />
              <HThumb />
              <ChevronRight size={11} strokeWidth={3} color="#555" />
            </HScroll>
          </TreePanel>
          <ThumbPanel><LampPicture /></ThumbPanel>
          <ThumbPanel><PolarPlot /></ThumbPanel>
        </LeftColumn>
        <MainPane>
          <TabStrip>
            {TAB_ICONS.map((icon, i) => (
              <Tab key={i} $active={i === 1}>{icon}</Tab>
            ))}
          </TabStrip>
          <ScrollPane>
            <Content>
              <TopRow>
                <Panel $w={934} $h={293}>
                  <BarChart />
                  <ChartRadios>
                    <RadioRow $pl={5} $h={16} $gap={2}><RadioDot $on />By Color</RadioRow>
                    <RadioRow $pl={5} $h={17} $gap={2}><RadioDot />By Bin</RadioRow>
                  </ChartRadios>
                </Panel>
                <GroupBox>
                  <GroupLegend>Graphics + Analysis - Visible</GroupLegend>
                  <AnalysisButton>CRI Analysis</AnalysisButton>
                  <AnalysisButton>MacAdam Analysis</AnalysisButton>
                  <AnalysisButton $focus>IES TM-30 Analysis</AnalysisButton>
                  <AnalysisButton>Spectrum Analysis</AnalysisButton>
                </GroupBox>
              </TopRow>
              <PlotGrid>
                <CellTitle $h={32} $top={0}>Chromatic Coordinates (a', b') 99 CES</CellTitle>
                <CellTitle $h={32} $top={0}>Color Vector Graphic</CellTitle>
                <CellTitle $h={32} $top={0} $shift={28}>Color Distorsion Graphic</CellTitle>
                <span />
                <ScatterPlot />
                <VectorPlot />
                <DistortionPlot />
                <span />
                <CellTitle $h={29} $top={3}>Rg vs Rf Plot</CellTitle>
                <CellTitle $h={29} $top={3}>Gamut Polygon</CellTitle>
                <CellTitle $h={29} $top={3} $shift={28}>Bin Deviation</CellTitle>
                <span />
                <RgRfPlot />
                <GamutPlot />
                <BinPlot />
                <SideRadios>
                  <RadioRow $h={17}><RadioDot $on />By Chroma</RadioRow>
                  <RadioRow $h={17}><RadioDot />By Hue</RadioRow>
                </SideRadios>
              </PlotGrid>
            </Content>
            <VScroll>
              <ChevronUp size={12} strokeWidth={3} color="#333" />
              <VThumb />
              <ChevronDown size={12} strokeWidth={3} color="#333" />
            </VScroll>
          </ScrollPane>
        </MainPane>
      </Body>
      <Footer>
        <Field $w={445} $mr={11}>
          <FieldLegend>Luminaire</FieldLegend>
          <InfoRow><Lbl $w={125}>Source Flux</Lbl><Val $ml={10}>5600.00 lm</Val></InfoRow>
          <InfoRow><Lbl $w={125}>Luminaire Flux</Lbl><Val $ml={10}>5600.00 lm</Val></InfoRow>
          <InfoRow>
            <Lbl $w={125}>Luminaire Power</Lbl><Val $ml={10} $w={100}>89.00 W</Val>
            <Lbl $w={109}>Efficacy</Lbl><Val $ml={10}>62.921 lm/W</Val>
          </InfoRow>
          <InfoRow>
            <Lbl $w={80}>Code</Lbl><Val $ml={6} $w={149}>A12654</Val>
            <Lbl $w={109}>Driving Current</Lbl><Val $ml={3}>0.50 A</Val>
          </InfoRow>
          <InfoRow><Lbl $w={80}>Name</Lbl><Val $ml={10}>Pinco 36 LED RA 4000K</Val></InfoRow>
        </Field>
        <Field $w={493} $mr={9}>
          <FieldLegend>Measurem.</FieldLegend>
          <InfoRow>
            <Lbl $w={94}>Efficiency</Lbl><Val $ml={6} $w={160}>100.00 %</Val>
            <Lbl $w={99}>Max Inten.</Lbl><Val $ml={10}>549.00&nbsp; cd/klm</Val>
          </InfoRow>
          <InfoRow>
            <Lbl $w={94}>Symmetry</Lbl><Val $ml={6} $w={160}>Asymmetrical</Val>
            <Lbl $w={99}>Pos. Max</Lbl><Val $ml={10}>C=30.00 G=56.00</Val>
          </InfoRow>
          <InfoRow>
            <Lbl $w={94}>Maximum Gamma</Lbl><Val $ml={10} $w={156}>180°</Val>
            <Lbl $w={99}>Meas.Flux</Lbl><Val $ml={10}>5384.000 lm</Val>
          </InfoRow>
          <InfoRow>
            <Lbl $w={94}>Code</Lbl><Val $ml={6} $w={160}>R12654</Val>
            <Lbl $w={99}>Frontal Area</Lbl><Val $ml={12}>0.078400 m2</Val>
          </InfoRow>
          <InfoRow>
            <Lbl $w={94}>Name</Lbl><Val $ml={6} $w={160}>RPinco 36 LED RA 4000K</Val>
            <Lbl $w={99}>Side Area</Lbl><Val $ml={12}>0.000000 m2</Val>
          </InfoRow>
        </Field>
        <DimColumn>
          <DimBox>
            <svg width="50" height="58" viewBox="0 0 50 58">
              <rect x="13" y="6.5" width="25" height="44" fill="#f8f8f4" stroke="#000" />
              <path d="M25.5 0v58" stroke="#2a4a8a" />
              <path d="M0 29h50" stroke="#f05a28" />
            </svg>
          </DimBox>
          <DimText $mt={5}>{"Lum. Dim.   Length:508 mm"}</DimText>
          <DimText $mt={6}>Width:285 mm Height:140 mm</DimText>
        </DimColumn>
      </Footer>
    </Window>
  );
}
